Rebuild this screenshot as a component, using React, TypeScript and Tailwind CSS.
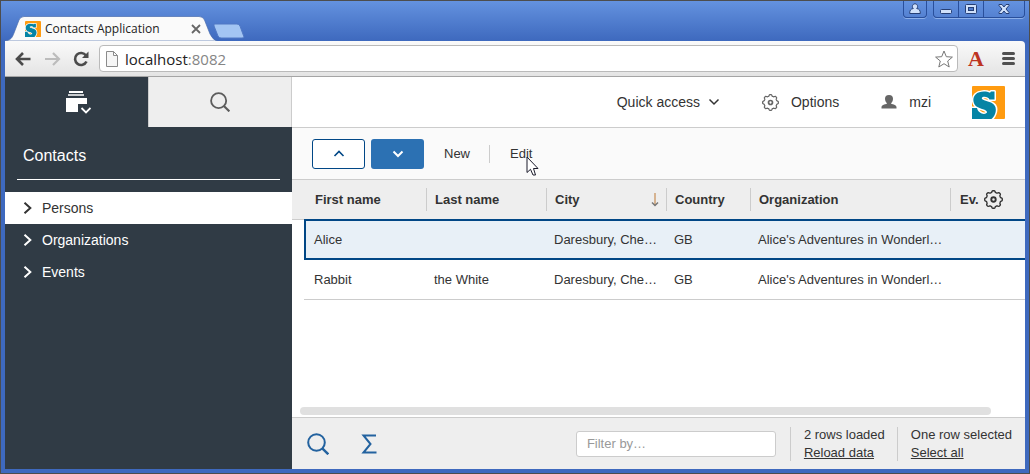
import React from "react";

type IconProps = { className?: string };

function Logo({ className }: IconProps) {
  return (
    <svg viewBox="0 0 33 33" className={className} aria-hidden="true">
      <rect width="33" height="33" rx="1" fill="#ff9b10" />
      <path
        d="M22.500 5.500V13.500H17.500C16.500 10.500 10.500 9.800 9.800 12C9.500 14.500 15 14.500 19 16.500C24.500 19 24.500 24 23 28C21.500 32 18 35 14 35H-3V22H5C6 27.500 13 29.500 15 26.500C15.500 23.500 8 23 4.500 20.500C.5 17.500 .5 11.500 3.500 8.500C7 5 14 5 18 6.800L19 5.500Z"
        fill="#0584a5"
        stroke="#fff"
        strokeWidth="3"
        paintOrder="stroke"
        strokeLinejoin="round"
      />
    </svg>
  );
}

function Gear({ className }: IconProps) {
  const points = Array.from({ length: 96 }, (_, i) => {
    const a = (i / 96) * Math.PI * 2;
    const r = 7.6 + 0.75 * Math.tanh(2.5 * Math.cos(8 * a));
    return `${(9 + r * Math.sin(a)).toFixed(2)},${(9 - r * Math.cos(a)).toFixed(2)}`;
  }).join(" ");
  return (
    <svg viewBox="0 0 18 18" className={className} fill="none" stroke="currentColor" aria-hidden="true">
      <polygon points={points} strokeWidth="1.3" strokeLinejoin="round" />
      <circle cx="9" cy="9" r="2.100" strokeWidth="1.800" />
    </svg>
  );
}

function Magnifier({ className }: IconProps) {
  return (
    <svg viewBox="0 0 22 22" className={className} fill="none" stroke="currentColor" strokeWidth="2" aria-hidden="true">
      <circle cx="9.500" cy="9.500" r="8.300" />
      <path d="M15.300 15.300L21.300 21.300" strokeWidth="2.400" />
    </svg>
  );
}

function Chevron({ className, d, width = 2 }: IconProps & { d: string; width?: number }) {
  return (
    <svg viewBox="0 0 12 12" className={className} fill="none" stroke="currentColor" strokeWidth={width} aria-hidden="true">
      <path d={d} />
    </svg>
  );
}

const RIGHT = "M3 1.500L8 6L3 10.500";
const DOWN = "M1.500 3.500L6 8L10.500 3.500";
const UP = "M1.500 8L6 3.500L10.500 8";

function WindowControls() {
  const cell = "flex h-4 items-center justify-center border-[#294f9b]";
  return (
    <div className="flex items-start gap-1.5 text-[#263f75]">
      <button aria-label="Profile" className={`${cell} h-[17px] w-6 rounded-b-sm border border-t-0 shadow-[0_1px_0_#8db0ea]`}>
        <svg viewBox="0 0 12 12" className="size-3" fill="#cfe0fa" stroke="currentColor">
          <path d="M4.300 5.500C2.500 4 3.500 .8 6 .8S9.500 4 7.700 5.500C10.500 6 11.300 7.500 11.300 10.500H.7C.7 7.500 1.500 6 4.300 5.500Z" />
        </svg>
      </button>
      <div className="flex rounded-b-sm border border-t-0 border-[#294f9b] shadow-[0_1px_0_#8db0ea]">
        <button aria-label="Minimize" className={`${cell} w-6`}>
          <svg viewBox="0 0 12 12" className="size-3" fill="#cfe0fa" stroke="currentColor">
            <rect x=".5" y="6.500" width="11" height="4" rx="1" />
          </svg>
        </button>
        <button aria-label="Maximize" className={`${cell} w-[26px] border-x`}>
          <svg viewBox="0 0 12 12" className="size-3" fill="#cfe0fa" stroke="currentColor">
            <rect x=".5" y="1.500" width="11" height="9" rx="1" />
            <rect x="3.500" y="4.500" width="5" height="3" fill="#4f7bcd" />
          </svg>
        </button>
        <button aria-label="Close" className={`${cell} w-10`}>
          <svg viewBox="0 0 12 12" className="size-3" fill="#cfe0fa" stroke="currentColor">
            <path d="M1 1.500H4L6 4L8 1.500H11V2.500L8 6L11 9.500V10.500H8L6 8L4 10.500H1V9.500L4 6L1 2.500Z" />
          </svg>
        </button>
      </div>
    </div>
  );
}

function BrowserChrome() {
  return (
    <header className="font-['Open_Sans',sans-serif]">
      <div className="flex h-10 items-start justify-between">
        <div className="flex items-end pt-[15px]">
          <div className="relative flex h-[25px] w-[212px] items-center pl-5">
            <svg viewBox="0 0 212 25" className="absolute inset-0 h-full w-full" aria-hidden="true">
              <path d="M0 25C6 24 7 22 9 17L14 4Q15.500 .5 19 .5H194Q198 .5 199.500 4L205 18Q208 24 212 25Z" fill="#fafafa" stroke="#4b6dae" strokeWidth=".7" />
            </svg>
            <Logo className="relative size-4" />
            <span className="relative ml-1 whitespace-nowrap text-xs text-[#222]">Contacts Application</span>
            <button aria-label="Close tab" className="absolute right-4 top-2">
              <svg viewBox="0 0 10 10" className="size-2.5" stroke="#666" strokeWidth="1.800">
                <path d="M1 1L9 9M9 1L1 9" />
              </svg>
            </button>
          </div>
          <button aria-label="New tab" className="-ml-1 mb-0.5">
            <svg viewBox="0 0 32 16" className="h-4 w-8">
              <path d="M1 1H24Q26 1 27 3L31 14Q31 15 29 15H8Q6 15 5 13L1 3Z" fill="#a3c5f3" stroke="#5078c4" />
            </svg>
          </button>
        </div>
        <WindowControls />
      </div>
      <div className="flex h-9 items-center rounded-tr-sm border-b border-[#a5a5a5] bg-linear-to-b from-[#fafafa] to-[#e4e4e4] px-2.5">
        <button aria-label="Back" className="mr-3.5 text-[#4b4b4b]">
          <svg viewBox="0 0 16 14" className="h-3.5 w-4" fill="none" stroke="currentColor" strokeWidth="2.600">
            <path d="M15.500 7H2.500M8 1L2 7L8 13" />
          </svg>
        </button>
        <button aria-label="Forward" className="mr-3 text-[#bcbcbc]">
          <svg viewBox="0 0 16 14" className="h-3.5 w-4" fill="none" stroke="currentColor" strokeWidth="2.200">
            <path d="M0 7H13.500M8 1L14 7L8 13" />
          </svg>
        </button>
        <button aria-label="Reload" className="mr-2.5 text-[#4b4b4b]">
          <svg viewBox="0 0 16 16" className="size-4" fill="none" stroke="currentColor" strokeWidth="2.600">
            <path d="M13 4.500A6 6 0 1 0 13.500 10.500" />
            <path d="M15.500 .5V7H9Z" fill="currentColor" stroke="none" />
          </svg>
        </button>
        <div className="flex h-[27px] flex-1 items-center rounded-sm border border-[#bababa] bg-white px-1.5">
          <svg viewBox="0 0 12 16" className="mr-[7px] h-4 w-3" fill="#f6f6f6" stroke="#8b8b8b" aria-hidden="true">
            <path d="M.5 .5H7.500L11.500 4.500V15.500H.5ZM7.500 .5V4.500H11.500" />
          </svg>
          <div className="flex-1 text-[15px] leading-6 text-[#222]">
            localhost<span className="text-[#858585]">:8082</span>
          </div>
          <button aria-label="Bookmark">
            <svg viewBox="0 0 18 18" className="-mr-0.5 size-[18px]" fill="#fff" stroke="#777" strokeLinejoin="round">
              <path d="M9 1L11.300 6.700L17.400 7.100L12.700 11L14.200 17L9 13.700L3.800 17L5.300 11L.6 7.100L6.700 6.700Z" />
            </svg>
          </button>
        </div>
        <button className="ml-2.5 w-4 font-['Liberation_Serif',serif] text-[22px] leading-6 font-bold text-[#bd3422]">A</button>
        <button aria-label="Menu" className="ml-[18px] flex w-[13px] flex-col gap-0.5">
          <span className="h-[3px] rounded-xs bg-[#505050]" />
          <span className="h-[3px] rounded-xs bg-[#505050]" />
          <span className="h-[3px] rounded-xs bg-[#505050]" />
        </button>
      </div>
    </header>
  );
}

function Sidebar() {
  return (
    <aside className="flex w-[287px] shrink-0 flex-col bg-[#303b45] text-white">
      <div className="flex h-[50px]">
        <button aria-label="Outlines" className="flex flex-1 items-center justify-center">
          <svg viewBox="0 0 26 24" className="ml-1 h-6 w-[26px]" aria-hidden="true">
            <path d="M4 1H18V3H4Z" fill="#fff" />
            <path d="M3 4H19V6H3Z" fill="#c9cccf" />
            <path d="M1 8H22V14H13V22H1Z" fill="#fff" />
            <path d="M16.500 18L21 22.500L25.500 18" fill="none" stroke="#fff" strokeWidth="1.800" />
          </svg>
        </button>
        <button aria-label="Search" className="flex flex-1 items-center justify-center border-x border-[#ccc] bg-[#eee] text-[#5c5c5c]">
          <Magnifier className="size-5" />
        </button>
      </div>
      <h1 className="mx-3 h-[53px] border-b border-white px-1.5 pt-[17px] text-base leading-6">Contacts</h1>
      <nav className="mt-3 text-sm leading-8">
        <a href="#persons" className="flex items-center gap-[7px] bg-white pl-4 text-[#333]">
          <Chevron d={RIGHT} width={1.7} className="size-3.5" />
          Persons
        </a>
        <a href="#organizations" className="flex items-center gap-[7px] pl-4">
          <Chevron d={RIGHT} width={1.7} className="size-3.5" />
          Organizations
        </a>
        <a href="#events" className="flex items-center gap-[7px] pl-4">
          <Chevron d={RIGHT} width={1.7} className="size-3.5" />
          Events
        </a>
      </nav>
    </aside>
  );
}

function TopBar() {
  return (
    <div className="flex h-[51px] items-center justify-end border-b border-[#ccc] bg-white pr-5 text-sm">
      <button className="flex items-center gap-2">
        Quick access
        <Chevron d={DOWN} width={1.5} className="size-3" />
      </button>
      <button className="ml-[42px] flex items-center gap-3">
        <Gear className="size-[17px] text-[#666]" />
        Options
      </button>
      <button className="ml-[42px] flex items-center gap-3">
        <svg viewBox="0 0 16 14" className="h-3.5 w-4" fill="#666" aria-hidden="true">
          <path d="M8 0C5.200 0 4 1.500 4 3.700C4 5.700 5 7.200 6 8.200C5.800 9.500 .5 9.200 .5 12V13.500H15.500V12C15.500 9.200 10.200 9.500 10 8.200C11 7.200 12 5.700 12 3.700C12 1.500 10.800 0 8 0Z" />
        </svg>
        mzi
      </button>
      <Logo className="ml-[41px] size-[33px]" />
    </div>
  );
}

function Toolbar() {
  return (
    <div className="flex h-[52px] items-center border-b border-[#ccc] bg-[#fafafa] pl-5 text-[13px]">
      <button aria-label="Up" className="flex h-[30px] w-[53px] items-center justify-center rounded-[3px] border border-[#014786] bg-white text-[#014786]">
        <Chevron d={UP} width={1.6} className="size-3" />
      </button>
      <button aria-label="Down" className="ml-1.5 flex h-[30px] w-[53px] items-center justify-center rounded-[3px] bg-[#2c71b3] text-white">
        <Chevron d={DOWN} className="size-3" />
      </button>
      <button className="ml-5">New</button>
      <div className="ml-[19px] h-[18px] w-px bg-[#ccc]" />
      <div className="relative ml-5">
        <button>Edit</button>
        <svg viewBox="0 0 13 20" className="absolute left-4 top-3 h-5 w-[13px]" aria-hidden="true">
          <path d="M1 1V16.500L4.500 13.300L7 19H9.500L7.500 12.500H12Z" fill="#fff" stroke="#1b1b2b" />
        </svg>
      </div>
    </div>
  );
}

const headers = ["Last name", "City", "Country", "Organization"];
const rows = [
  ["Alice", "", "Daresbury, Che…", "GB", "Alice's Adventures in Wonderl…", ""],
  ["Rabbit", "the White", "Daresbury, Che…", "GB", "Alice's Adventures in Wonderl…", ""],
];

function PersonsTable() {
  return (
    <table className="w-full table-fixed border-separate border-spacing-0 text-left text-[13px]">
      <colgroup>
        <col className="w-3" />
        <col className="w-[122px]" />
        <col className="w-[120px]" />
        <col className="w-[120px]" />
        <col className="w-[84px]" />
        <col className="w-[200px]" />
        <col />
      </colgroup>
      <thead className="bg-[#eee]">
        <tr className="h-[39px]">
          <td />
          <th className="pl-[11px]">First name</th>
          {headers.map((name) => (
            <th key={name}>
              <div className="flex h-[23px] items-center justify-between border-l border-[#ccc] pl-2 pr-[7px]">
                {name}
                {name === "City" && (
                  <svg viewBox="0 0 8 14" className="h-3.5 w-2" fill="none" stroke="#777" aria-label="Sorted">
                    <path d="M4 0V12" stroke="#c9945f" strokeWidth="1.300" />
                    <path d="M1 9.500L4 12.500L7 9.500" strokeWidth="1.500" />
                  </svg>
                )}
              </div>
            </th>
          ))}
          <th>
            <div className="flex h-[23px] items-center gap-[5px] border-l border-[#ccc] pl-[9px]">
              Ev.
              <button aria-label="Table settings">
                <Gear className="size-[19px]" />
              </button>
            </div>
          </th>
        </tr>
      </thead>
      <tbody>
        <tr className="h-[41px]">
          <td className="border-t border-[#ccc]" />
          {rows[0].map((cell, i) => (
            <td key={i} className="truncate border-y-2 border-[#014786] bg-[#e8f0f7] pl-2 [&:nth-child(2)]:border-l-2">
              {cell}
            </td>
          ))}
        </tr>
        <tr className="h-10">
          <td />
          {rows[1].map((cell, i) => (
            <td key={i} className="truncate border-b border-[#ccc] pl-2 [&:nth-child(2)]:pl-2.5">
              {cell}
            </td>
          ))}
        </tr>
      </tbody>
    </table>
  );
}

function StatusBar() {
  return (
    <footer className="flex h-[52px] items-center border-t border-[#ccc] bg-[#eee] pl-[15px] pr-[13px] text-[13px]">
      <button aria-label="Search rows" className="text-[#23629f]">
        <Magnifier className="size-[22px]" />
      </button>
      <button aria-label="Aggregate" className="ml-8 text-[#23629f]">
        <svg viewBox="0 0 16 20" className="h-5 w-4" fill="none" stroke="currentColor" strokeWidth="2">
          <path d="M15 1.500H2.500L9.500 10L2.500 18.500H15.500" />
        </svg>
      </button>
      <input
        aria-label="Filter"
        placeholder="Filter by…"
        className="ml-auto h-[26px] w-[200px] rounded-[3px] border border-[#ccc] bg-white px-2.5 placeholder:text-[#999]"
      />
      <div className="ml-3.5 border-l border-[#ccc] pl-[13px] leading-[17px]">
        <div className="mb-0.5 h-[15px] leading-[15px]">2 rows loaded</div>
        <a href="#reload" className="block underline">Reload data</a>
      </div>
      <div className="ml-3 border-l border-[#ccc] pl-[13px] leading-[17px]">
        <div className="mb-0.5 h-[15px] leading-[15px]">One row selected</div>
        <a href="#select-all" className="block underline">Select all</a>
      </div>
    </footer>
  );
}

export default function App() {
  return (
    <div className="flex min-h-screen flex-col border border-[#4d4d4d] bg-[#3e69be] bg-linear-to-b from-[#6492df] to-[#3e69be] to-[40px] px-1 pb-1 font-['Liberation_Sans',sans-serif] text-[#333]">
      <BrowserChrome />
      <div className="flex flex-1">
        <Sidebar />
        <main className="flex min-w-0 flex-1 flex-col bg-white">
          <TopBar />
          <Toolbar />
          <PersonsTable />
          <div className="mt-auto mb-0.5 ml-2 mr-[34px] h-2 rounded-full bg-[#e0e0e0]" />
          <StatusBar />
        </main>
      </div>
    </div>
  );
}
